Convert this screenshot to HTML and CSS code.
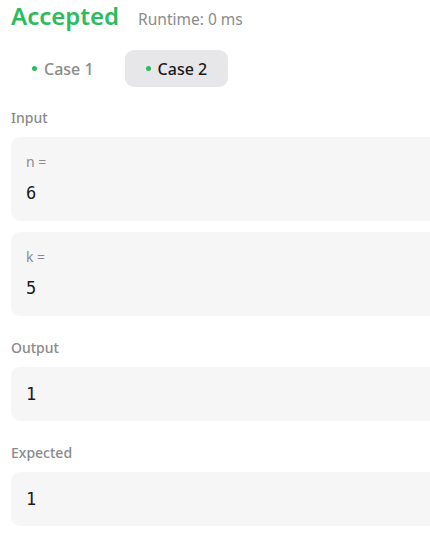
FILE: index.html
```html
<!DOCTYPE html>
<html>
<head>
<meta charset="utf-8">
<link rel="stylesheet" href="styles.css">
</head>
<body>
<div class="page">
  <div class="result">
    <span class="status">Accepted</span>
    <span class="runtime">Runtime: 0 ms</span>
  </div>
  <div class="tabs">
    <div class="tab"><span class="dot"></span>Case 1</div>
    <div class="tab active"><span class="dot"></span>Case 2</div>
  </div>
  <div class="section first">
    <div class="label">Input</div>
    <div class="box">
      <div class="var">n =</div>
      <div class="val">6</div>
    </div>
    <div class="box">
      <div class="var">k =</div>
      <div class="val">5</div>
    </div>
  </div>
  <div class="section">
    <div class="label">Output</div>
    <div class="box single">
      <div class="val">1</div>
    </div>
  </div>
  <div class="section">
    <div class="label">Expected</div>
    <div class="box single">
      <div class="val">1</div>
    </div>
  </div>
</div>
</body>
</html>
```
FILE: styles.css
```css
html, body {
  margin: 0;
  padding: 0;
  background: #ffffff;
  overflow: hidden;
}
body {
  font-family: "Noto Sans", "Open Sans", sans-serif;
  color: #262626;
}
.page {
  padding: 0 0 0 11px;
  width: 440px;
}
.result {
  display: flex;
  align-items: baseline;
  gap: 19px;
  height: 32px;
}
.status {
  font-size: 24px;
  font-weight: 600;
  color: #2cbb5d;
  line-height: 32px;
}
.runtime {
  font-size: 15.5px;
  color: #8c8c8c;
}
.tabs {
  display: flex;
  gap: 10px;
  margin-top: 18px;
}
.tab {
  display: flex;
  align-items: center;
  gap: 7px;
  height: 37px;
  padding: 0 21px 0 21px;
  border-radius: 9px;
  font-size: 16px;
  font-weight: 500;
  color: #8a8a8a;
}
.tab.active {
  background: #e7e7e9;
  color: #1a1a1a;
}
.dot {
  width: 5px;
  height: 5px;
  border-radius: 50%;
  background: #2cbb5d;
}
.section {
  margin-top: 23px;
}
.section.first {
  margin-top: 22px;
}
.label {
  font-size: 14px;
  font-weight: 500;
  color: #8a8a8a;
  line-height: 18px;
  margin-bottom: 10px;
}
.box {
  background: #f6f6f6;
  border-radius: 9px;
  padding: 15px 15px 17px;
  margin-bottom: 11px;
}
.box.single {
  padding: 16px 15px;
  margin-bottom: 0;
}
.var {
  font-size: 14px;
  color: #8c8c8c;
  line-height: 20px;
}
.val {
  font-family: "DejaVu Sans Mono", "Liberation Mono", monospace;
  font-size: 17px;
  color: #1a1a1a;
  line-height: 22px;
  margin-top: 10px;
}
.box.single .val {
  margin-top: 0;
}
```
